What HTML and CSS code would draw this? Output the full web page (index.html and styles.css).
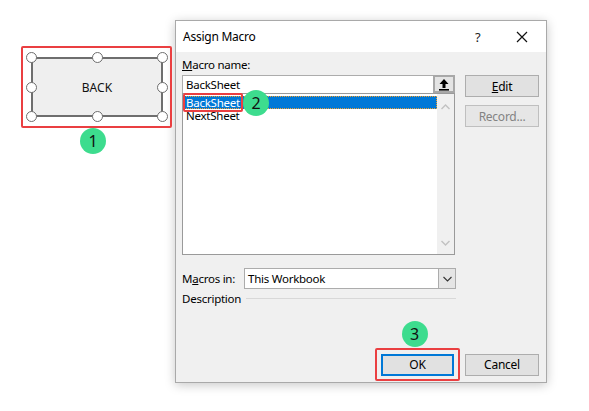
FILE: index.html
```html
<!DOCTYPE html>
<html lang="en">
<head>
<meta charset="utf-8">
<title>Assign Macro</title>
<link rel="stylesheet" href="styles.css">
</head>
<body>
<div class="page">
  <div class="shape-col">
    <div class="shape-frame">
      <div class="shape">
        <span class="shape-text">BACK</span>
        <i class="handle h-tl"></i><i class="handle h-tc"></i><i class="handle h-tr"></i>
        <i class="handle h-ml"></i><i class="handle h-mr"></i>
        <i class="handle h-bl"></i><i class="handle h-bc"></i><i class="handle h-br"></i>
      </div>
    </div>
    <span class="badge badge-1">1</span>
  </div>

  <div class="dialog">
    <div class="titlebar">
      <span class="title">Assign Macro</span>
      <span class="help">?</span>
      <span class="close">
        <svg width="12" height="12" viewBox="0 0 12 12"><path d="M1 1 L11 11 M11 1 L1 11" stroke="#111" stroke-width="1.2" fill="none"/></svg>
      </span>
    </div>

    <div class="content">
      <div class="label"><u>M</u>acro name:</div>
      <div class="main">
        <div class="picker">
          <div class="namebox">
            <span class="name-value">BackSheet</span>
            <span class="upbtn">
              <svg width="12" height="13" viewBox="0 0 12 13"><path d="M6 1 L1.5 6 H4.5 V10 H7.5 V6 H10.5 Z" fill="#000"/><rect x="1" y="11" width="10" height="1.6" fill="#000"/></svg>
            </span>
          </div>
          <div class="list">
            <div class="items">
              <div class="item selected"><span class="item-mark">BackSheet</span><span class="badge badge-2">2</span></div>
              <div class="item">NextSheet</div>
            </div>
            <div class="vscroll">
              <svg width="9" height="6" viewBox="0 0 9 6"><path d="M0.5 5 L4.5 1 L8.5 5" stroke="#c2c2c2" stroke-width="1.4" fill="none"/></svg>
              <svg width="9" height="6" viewBox="0 0 9 6"><path d="M0.5 1 L4.5 5 L8.5 1" stroke="#c2c2c2" stroke-width="1.4" fill="none"/></svg>
            </div>
          </div>
        </div>
        <div class="side">
          <span class="btn"><u>E</u>dit</span>
          <span class="btn disabled">Record...</span>
        </div>
      </div>

      <div class="macros-in">
        <span class="mi-label">M<u>a</u>cros in:</span>
        <div class="combo">
          <span class="combo-value">This Workbook</span>
          <span class="combo-drop">
            <svg width="9" height="6" viewBox="0 0 9 6"><path d="M0.5 1 L4.5 5 L8.5 1" stroke="#333" stroke-width="1.1" fill="none"/></svg>
          </span>
        </div>
      </div>

      <div class="desc">
        <span>Description</span>
        <span class="desc-rule"></span>
      </div>

      <div class="footer">
        <div class="ok-mark">
          <span class="btn default">OK</span>
          <span class="badge badge-3">3</span>
        </div>
        <span class="btn">Cancel</span>
      </div>
    </div>
  </div>
</div>
</body>
</html>
```

FILE: styles.css
```css
* { box-sizing: border-box; }

body {
  margin: 0;
  background: #ffffff;
  font-family: "Noto Sans", "Open Sans", sans-serif;
  font-size: 11.5px;
  letter-spacing: -0.25px;
  color: #000;
}

.page {
  width: 589px;
  height: 411px;
  display: flex;
  align-items: flex-start;
  padding: 20px 0 0 21px;
}

/* ---------- selected shape on the sheet ---------- */
.shape-col {
  position: relative;
  margin-top: 26px;
  width: 150px;
}

.shape-frame {
  width: 151px;
  height: 82px;
  border: 2.5px solid #ea3f41;
  border-radius: 2px;
  padding: 9px 7px 9px 8px;
}

.shape {
  position: relative;
  height: 100%;
  background: #efefef;
  border: 2px solid #6e6e6e;
  display: flex;
  align-items: center;
  justify-content: center;
}

.shape-text {
  font-size: 12px;
  color: #111;
  letter-spacing: 0.1px;
}

.handle {
  position: absolute;
  width: 11px;
  height: 11px;
  border-radius: 50%;
  background: #fff;
  border: 1.6px solid #6e6e6e;
}
.h-tl { left: -7px; top: -7px; }
.h-tc { left: calc(50% - 5.5px); top: -7px; }
.h-tr { right: -7px; top: -7px; }
.h-ml { left: -7px; top: calc(50% - 5.5px); }
.h-mr { right: -7px; top: calc(50% - 5.5px); }
.h-bl { left: -7px; bottom: -7px; }
.h-bc { left: calc(50% - 5.5px); bottom: -7px; }
.h-br { right: -7px; bottom: -7px; }

/* ---------- numbered callouts ---------- */
.badge {
  position: absolute;
  width: 26px;
  height: 26px;
  border-radius: 50%;
  background: #3ddc8e;
  color: #111;
  font-size: 16px;
  letter-spacing: 0;
  line-height: 26px;
  text-align: center;
}
.badge-1 { left: 59px; top: 82px; }
.badge-2 { left: 60px; top: -6px; z-index: 2; }
.badge-3 { left: 24.5px; top: -29.5px; }

/* ---------- dialog window ---------- */
.dialog {
  margin-left: 4px;
  width: 372px;
  height: 363px;
  background: #f0f0f0;
  border: 1px solid #a9a9a9;
  box-shadow: 0 2px 10px rgba(0, 0, 0, 0.22);
  display: flex;
  flex-direction: column;
}

.titlebar {
  height: 31px;
  background: #fff;
  display: flex;
  align-items: center;
  padding: 0 0 0 7px;
}
.title { flex: 1; font-size: 12px; color: #000; }
.help { width: 10px; font-size: 13px; color: #222; margin-right: 31px; }
.close { width: 12px; height: 12px; margin-right: 18px; display: flex; }

.content {
  flex: 1;
  display: flex;
  flex-direction: column;
  padding: 5px 7px 0 6px;
}

.label {
  height: 16px;
  line-height: 16px;
}

.main {
  display: flex;
  gap: 10px;
  margin-top: 2px;
}

.picker { width: 274px; }

.namebox {
  height: 18px;
  background: #fff;
  border: 1px solid #acacac;
  border-bottom: none;
  display: flex;
  align-items: center;
}
.name-value { flex: 1; padding-left: 3px; line-height: 16px; }
.upbtn {
  width: 22px;
  height: 18px;
  margin-top: -1px;
  margin-right: -1px;
  border: 2px solid #a8a8a8;
  background: #e4e4e4;
  display: flex;
  align-items: center;
  justify-content: center;
}

.list {
  height: 162px;
  background: #fff;
  border: 1px solid #9a9a9a;
  display: flex;
}
.items { flex: 1; padding: 2px 0 0 0; }
.item {
  position: relative;
  height: 13px;
  line-height: 13px;
  padding-left: 3px;
  white-space: nowrap;
}
.item.selected {
  background: #0078d7;
  outline: 1px dotted #f0a030;
  outline-offset: -1px;
  color: #fff;
}

/* red call-out frame drawn around the selected macro name */
.item-mark { position: relative; }
.item-mark::after {
  content: "";
  position: absolute;
  left: -3px;
  right: -3px;
  top: -2px;
  bottom: -2px;
  border: 2px solid #ea3f41;
  border-radius: 2px;
}

.vscroll {
  width: 17px;
  background: #f0f0f0;
  display: flex;
  flex-direction: column;
  justify-content: space-between;
  align-items: center;
  padding: 10px 0 8px;
}

.side {
  display: flex;
  flex-direction: column;
  gap: 8px;
}

.btn {
  display: flex;
  align-items: center;
  justify-content: center;
  width: 74px;
  height: 22px;
  background: #e1e1e1;
  border: 1px solid #adadad;
  color: #000;
  font-size: 12px;
}
.btn.disabled { color: #838383; background: #e6e6e6; border-color: #bfbfbf; }
.btn.default { width: 73px; border: 2px solid #0078d7; }

.macros-in {
  display: flex;
  align-items: center;
  margin-top: 13px;
}
.mi-label { width: 62px; }
.combo {
  width: 212px;
  height: 21px;
  background: #fff;
  border: 1px solid #acacac;
  display: flex;
  align-items: center;
}
.combo-value { flex: 1; padding-left: 3px; }
.combo-drop {
  width: 18px;
  height: 21px;
  margin-right: -1px;
  border: 1px solid #acacac;
  background: #e5e5e5;
  display: flex;
  align-items: center;
  justify-content: center;
}

.desc {
  display: flex;
  align-items: center;
  height: 16px;
  margin-top: 1px;
  width: 274px;
}
.desc-rule {
  flex: 1;
  height: 1px;
  background: #d8d8d8;
  margin-left: 5px;
}

.footer {
  display: flex;
  align-items: center;
  gap: 5px;
  margin-top: 42px;
  padding-left: 193px;
}
.ok-mark {
  position: relative;
  border: 2.5px solid #ea3f41;
  border-radius: 2px;
  padding: 3.5px 4px;
}
```
